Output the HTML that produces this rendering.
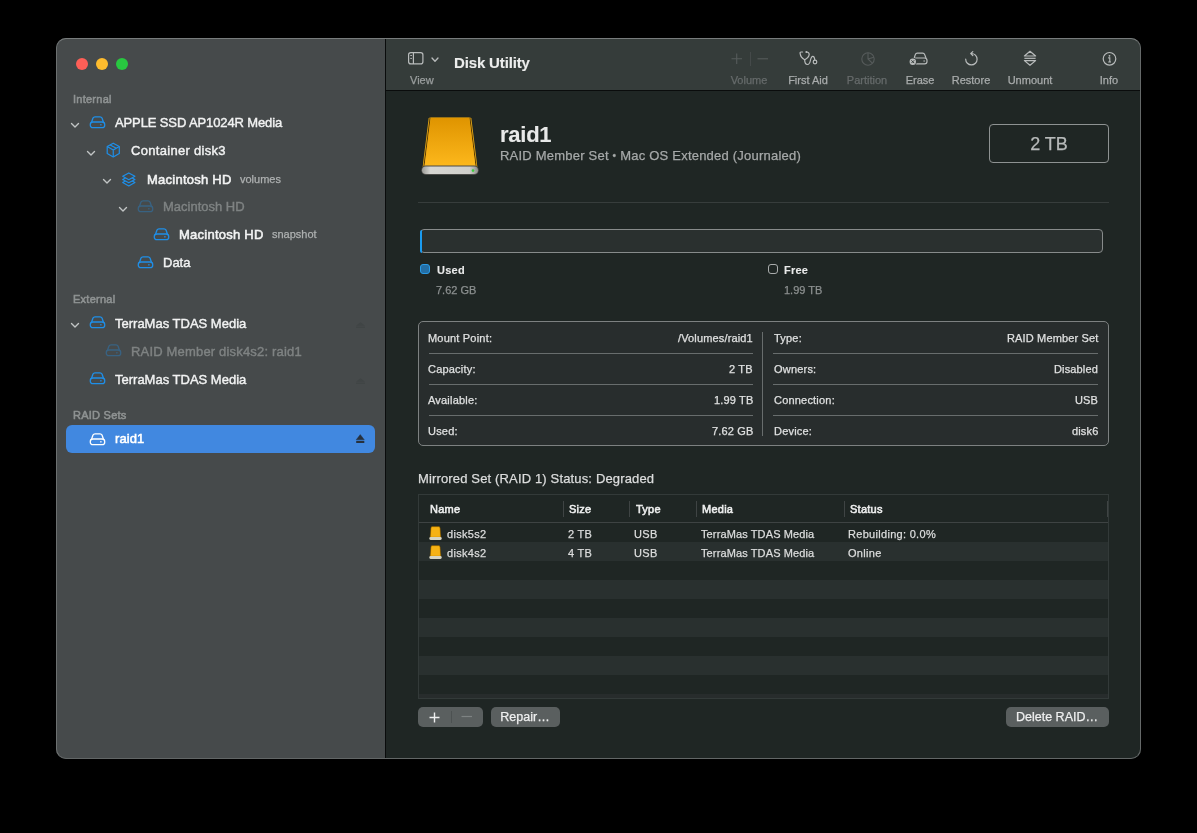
<!DOCTYPE html>
<html><head><meta charset="utf-8"><title>Disk Utility</title>
<style>
*{box-sizing:border-box;margin:0;padding:0}
html,body{width:1197px;height:833px;background:#000;overflow:hidden;font-family:"Liberation Sans",sans-serif;position:relative}
#win{position:absolute;border-radius:10px;overflow:hidden}
#win .r{position:absolute}
.r{position:absolute}
.t{position:absolute;white-space:nowrap;line-height:1;will-change:transform;-webkit-text-stroke:0.25px currentColor}
svg{position:absolute;overflow:visible}
</style></head><body>
<div id=win style="left:56px;top:38px;width:1085px;height:721px">
<div class=r style="left:0;top:0;width:329px;height:721px;background:#464a4b"></div>
<div class=r style="left:329px;top:0;width:1px;height:721px;background:#0a0c0c"></div>
<div class=r style="left:330px;top:0;width:755px;height:52px;background:#353c3a"></div>
<div class=r style="left:330px;top:52px;width:755px;height:1px;background:#0a0c0c"></div>
<div class=r style="left:330px;top:53px;width:755px;height:668px;background:#1f2624"></div>
</div>
<div class=r style="left:76px;top:58px;width:12px;height:12px;border-radius:50%;background:#fe5f57"></div>
<div class=r style="left:96px;top:58px;width:12px;height:12px;border-radius:50%;background:#febc2e"></div>
<div class=r style="left:116px;top:58px;width:12px;height:12px;border-radius:50%;background:#28c840"></div>
<div class=t style="top:93.69px;font-size:11px;color:#8f9393;-webkit-text-stroke:0.55px currentColor;letter-spacing:0.25px;left:72.5px;">Internal</div>
<svg style="left:69.7px;top:121.7px" width="10" height="7" viewBox="0 0 10 7"><path d='M1.5 1.5 L5 5 L8.5 1.5' fill='none' stroke='#c2c5c5' stroke-width='1.4' stroke-linecap='round' stroke-linejoin='round'/></svg>
<svg style="left:88.9px;top:115px" width="17" height="14" viewBox="0 0 17 14"><g fill='none' stroke='#1f8fe8' stroke-width='1.3' opacity='1' stroke-linejoin='round'><path d='M2.6 7 L4 3 Q4.6 1.8 6 1.8 H11 Q12.4 1.8 13 3 L14.4 7'/><rect x='1.3' y='7' width='14.4' height='5.7' rx='2.5'/></g><circle cx='11.9' cy='9.85' r='0.8' fill='#1f8fe8' opacity='1'/></svg>
<div class=t style="top:116.00px;font-size:13px;color:#f2f3f3;-webkit-text-stroke:0.4px currentColor;letter-spacing:-0.12px;left:115.2px;">APPLE SSD AP1024R Media</div>
<svg style="left:85.5px;top:149.7px" width="10" height="7" viewBox="0 0 10 7"><path d='M1.5 1.5 L5 5 L8.5 1.5' fill='none' stroke='#c2c5c5' stroke-width='1.4' stroke-linecap='round' stroke-linejoin='round'/></svg>
<svg style="left:106px;top:142px" width="15" height="16" viewBox="0 0 15 16"><g fill='none' stroke='#1f8fe8' stroke-width='1.2' stroke-linejoin='round'><path d='M7.25 1.2 L13.3 4.6 V11.6 L7.25 15 L1.2 11.6 V4.6 Z'/><path d='M1.2 4.6 L7.25 8 L13.3 4.6 M7.25 8 V15'/><path d='M4.2 2.9 L10.3 6.3' /></g></svg>
<div class=t style="top:144.00px;font-size:13px;color:#f2f3f3;-webkit-text-stroke:0.4px currentColor;letter-spacing:0.3px;left:131.2px;">Container disk3</div>
<svg style="left:101.5px;top:177.7px" width="10" height="7" viewBox="0 0 10 7"><path d='M1.5 1.5 L5 5 L8.5 1.5' fill='none' stroke='#c2c5c5' stroke-width='1.4' stroke-linecap='round' stroke-linejoin='round'/></svg>
<svg style="left:122px;top:171.5px" width="14" height="15" viewBox="0 0 14 15"><path d='M6.8 7.1000000000000005 L12.9 10.5 L6.8 13.9 L0.7 10.5 Z' fill='#45494a' stroke='#1f8fe8' stroke-width='1.2' stroke-linejoin='round'/><path d='M6.8 4.0 L12.9 7.4 L6.8 10.8 L0.7 7.4 Z' fill='#45494a' stroke='#1f8fe8' stroke-width='1.2' stroke-linejoin='round'/><path d='M6.8 0.9 L12.9 4.3 L6.8 7.7 L0.7 4.3 Z' fill='#45494a' stroke='#1f8fe8' stroke-width='1.2' stroke-linejoin='round'/></svg>
<div class=t style="top:173.00px;font-size:13px;color:#f2f3f3;-webkit-text-stroke:0.55px currentColor;letter-spacing:0.25px;left:147.3px;">Macintosh HD</div>
<div class=t style="top:173.99px;font-size:11px;color:#aeb1b1;left:239.5px;">volumes</div>
<svg style="left:117.5px;top:205.7px" width="10" height="7" viewBox="0 0 10 7"><path d='M1.5 1.5 L5 5 L8.5 1.5' fill='none' stroke='#c2c5c5' stroke-width='1.4' stroke-linecap='round' stroke-linejoin='round'/></svg>
<svg style="left:136.9px;top:199px" width="17" height="14" viewBox="0 0 17 14"><g fill='none' stroke='#1f8fe8' stroke-width='1.3' opacity='0.35' stroke-linejoin='round'><path d='M2.6 7 L4 3 Q4.6 1.8 6 1.8 H11 Q12.4 1.8 13 3 L14.4 7'/><rect x='1.3' y='7' width='14.4' height='5.7' rx='2.5'/></g><circle cx='11.9' cy='9.85' r='0.8' fill='#1f8fe8' opacity='0.35'/></svg>
<div class=t style="top:200.00px;font-size:13px;color:#7f8383;-webkit-text-stroke:0.4px currentColor;left:163.3px;">Macintosh HD</div>
<svg style="left:152.9px;top:227px" width="17" height="14" viewBox="0 0 17 14"><g fill='none' stroke='#1f8fe8' stroke-width='1.3' opacity='1' stroke-linejoin='round'><path d='M2.6 7 L4 3 Q4.6 1.8 6 1.8 H11 Q12.4 1.8 13 3 L14.4 7'/><rect x='1.3' y='7' width='14.4' height='5.7' rx='2.5'/></g><circle cx='11.9' cy='9.85' r='0.8' fill='#1f8fe8' opacity='1'/></svg>
<div class=t style="top:228.00px;font-size:13px;color:#f2f3f3;-webkit-text-stroke:0.55px currentColor;letter-spacing:0.25px;left:179.3px;">Macintosh HD</div>
<div class=t style="top:228.99px;font-size:11px;color:#aeb1b1;left:271.5px;">snapshot</div>
<svg style="left:136.9px;top:255px" width="17" height="14" viewBox="0 0 17 14"><g fill='none' stroke='#1f8fe8' stroke-width='1.3' opacity='1' stroke-linejoin='round'><path d='M2.6 7 L4 3 Q4.6 1.8 6 1.8 H11 Q12.4 1.8 13 3 L14.4 7'/><rect x='1.3' y='7' width='14.4' height='5.7' rx='2.5'/></g><circle cx='11.9' cy='9.85' r='0.8' fill='#1f8fe8' opacity='1'/></svg>
<div class=t style="top:256.00px;font-size:13px;color:#f2f3f3;-webkit-text-stroke:0.4px currentColor;left:163.3px;">Data</div>
<div class=t style="top:293.69px;font-size:11px;color:#8f9393;-webkit-text-stroke:0.55px currentColor;letter-spacing:0.25px;left:72.5px;">External</div>
<svg style="left:69.7px;top:321.7px" width="10" height="7" viewBox="0 0 10 7"><path d='M1.5 1.5 L5 5 L8.5 1.5' fill='none' stroke='#c2c5c5' stroke-width='1.4' stroke-linecap='round' stroke-linejoin='round'/></svg>
<svg style="left:88.9px;top:315px" width="17" height="14" viewBox="0 0 17 14"><g fill='none' stroke='#1f8fe8' stroke-width='1.3' opacity='1' stroke-linejoin='round'><path d='M2.6 7 L4 3 Q4.6 1.8 6 1.8 H11 Q12.4 1.8 13 3 L14.4 7'/><rect x='1.3' y='7' width='14.4' height='5.7' rx='2.5'/></g><circle cx='11.9' cy='9.85' r='0.8' fill='#1f8fe8' opacity='1'/></svg>
<div class=t style="top:317.00px;font-size:13px;color:#f2f3f3;-webkit-text-stroke:0.4px currentColor;left:115.3px;">TerraMas TDAS Media</div>
<svg style="left:104.9px;top:343px" width="17" height="14" viewBox="0 0 17 14"><g fill='none' stroke='#1f8fe8' stroke-width='1.3' opacity='0.35' stroke-linejoin='round'><path d='M2.6 7 L4 3 Q4.6 1.8 6 1.8 H11 Q12.4 1.8 13 3 L14.4 7'/><rect x='1.3' y='7' width='14.4' height='5.7' rx='2.5'/></g><circle cx='11.9' cy='9.85' r='0.8' fill='#1f8fe8' opacity='0.35'/></svg>
<div class=t style="top:345.00px;font-size:13px;color:#7f8383;-webkit-text-stroke:0.4px currentColor;letter-spacing:0.18px;left:131.2px;">RAID Member disk4s2: raid1</div>
<svg style="left:88.9px;top:371px" width="17" height="14" viewBox="0 0 17 14"><g fill='none' stroke='#1f8fe8' stroke-width='1.3' opacity='1' stroke-linejoin='round'><path d='M2.6 7 L4 3 Q4.6 1.8 6 1.8 H11 Q12.4 1.8 13 3 L14.4 7'/><rect x='1.3' y='7' width='14.4' height='5.7' rx='2.5'/></g><circle cx='11.9' cy='9.85' r='0.8' fill='#1f8fe8' opacity='1'/></svg>
<div class=t style="top:373.00px;font-size:13px;color:#f2f3f3;-webkit-text-stroke:0.4px currentColor;left:115.3px;">TerraMas TDAS Media</div>
<svg style="left:355px;top:321.5px" width="11" height="6" viewBox="0 0 11 6"><path d='M5.5 0.3 L10 3.8 H1 Z' fill='#404545'/><rect x='1' y='4.6' width='9' height='1.3' fill='#404545'/></svg>
<svg style="left:355px;top:377.5px" width="11" height="6" viewBox="0 0 11 6"><path d='M5.5 0.3 L10 3.8 H1 Z' fill='#404545'/><rect x='1' y='4.6' width='9' height='1.3' fill='#404545'/></svg>
<div class=t style="top:409.69px;font-size:11px;color:#8f9393;-webkit-text-stroke:0.55px currentColor;letter-spacing:0.25px;left:72.5px;">RAID Sets</div>
<div class=r style="left:66px;top:425px;width:309px;height:28px;border-radius:6px;background:#4188e0"></div>
<svg style="left:88.9px;top:432px" width="17" height="14" viewBox="0 0 17 14"><g fill='none' stroke='#ffffff' stroke-width='1.3' opacity='1' stroke-linejoin='round'><path d='M2.6 7 L4 3 Q4.6 1.8 6 1.8 H11 Q12.4 1.8 13 3 L14.4 7'/><rect x='1.3' y='7' width='14.4' height='5.7' rx='2.5'/></g><circle cx='11.9' cy='9.85' r='0.8' fill='#ffffff' opacity='1'/></svg>
<div class=t style="top:432.00px;font-size:13px;color:#ffffff;-webkit-text-stroke:0.55px currentColor;letter-spacing:0.1px;left:115.3px;">raid1</div>
<svg style="left:355.5px;top:434px" width="9" height="10" viewBox="0 0 9 10"><path d='M4.25 0.6 L8.3 5.8 H0.2 Z' fill='#27313d' stroke='#27313d' stroke-width='0.4' stroke-linejoin='round'/><rect x='0.2' y='6.9' width='8.1' height='2.1' fill='#27313d'/></svg>
<svg style="left:408px;top:52px" width="16" height="13" viewBox="0 0 16 13"><g fill='none' stroke='#b9bcbc' stroke-width='1.2'><rect x='0.6' y='0.6' width='14.3' height='11.3' rx='2.2'/><path d='M5.4 0.6 V11.9'/></g><rect x='2.3' y='3' width='1.6' height='1' fill='#b9bcbc'/><rect x='2.3' y='5.9' width='1.6' height='1' fill='#b9bcbc'/></svg>
<svg style="left:430.5px;top:56.5px" width="9" height="6" viewBox="0 0 9 6"><path d='M1 1 L4 4.3 L7 1' fill='none' stroke='#b9bcbc' stroke-width='1.3' stroke-linecap='round' stroke-linejoin='round'/></svg>
<div class=t style="top:75.29px;font-size:11px;color:#9a9e9e;left:409.5px;">View</div>
<div class=t style="top:55.10px;font-size:15px;color:#ecedec;font-weight:bold;-webkit-text-stroke:0.1px currentColor;letter-spacing:-0.15px;left:454.0px;">Disk Utility</div>
<svg style="left:730.5px;top:52.5px" width="12" height="12" viewBox="0 0 12 12"><path d='M5.7 0.5 V11 M0.5 5.8 H11' stroke='#565b5b' stroke-width='1.1'/></svg>
<div class=r style="left:749.5px;top:52px;width:1px;height:14px;background:#454a4a"></div>
<svg style="left:756.5px;top:52.5px" width="12" height="12" viewBox="0 0 12 12"><path d='M0.5 5.8 H11' stroke='#565b5b' stroke-width='1.1'/></svg>
<div class=t style="top:75.29px;font-size:11px;color:#666b6b;left:449.29999999999995px;width:600px;text-align:center;">Volume</div>
<svg style="left:799px;top:51px" width="19" height="15" viewBox="0 0 19 15"><g fill='none' stroke='#b9bcbc' stroke-width='1.2' stroke-linecap='round' stroke-linejoin='round'><path d='M3.6 1 H2 Q1 1 1.1 2.4 Q1.6 6.6 5.7 8.8 Q9.8 6.6 10.2 3.5 Q10.4 1.3 7.4 1'/><path d='M5.7 8.8 Q5.7 13.5 8.4 13.5 Q10.6 13.5 11.4 9.5 Q12.2 5.3 13.8 5.3 Q15.5 5.3 15.8 9'/><circle cx='16' cy='11' r='1.8'/></g><circle cx='7.4' cy='1.1' r='1' fill='#b9bcbc'/></svg>
<div class=t style="top:75.29px;font-size:11px;color:#a9acac;left:508px;width:600px;text-align:center;">First Aid</div>
<svg style="left:860.5px;top:51.5px" width="14" height="14" viewBox="0 0 14 14"><g fill='none' stroke='#565b5b' stroke-width='1.1'><circle cx='7' cy='7' r='6.2'/><path d='M7 0.8 V7 L11.3 11.2 M7 7 L12.9 5.2'/></g></svg>
<div class=t style="top:75.29px;font-size:11px;color:#666b6b;left:566.5px;width:600px;text-align:center;">Partition</div>
<svg style="left:908px;top:51px" width="20" height="15" viewBox="0 0 20 15"><g fill='none' stroke='#b9bcbc' stroke-width='1.2' stroke-linejoin='round'><path d='M6.2 7 L7.3 3.6 Q7.8 2.2 9.3 2.2 H14.7 Q16.2 2.2 16.7 3.6 L18 7'/><rect x='5.2' y='7' width='13.8' height='5.8' rx='2.4'/></g><circle cx='16.1' cy='10' r='0.75' fill='#b9bcbc'/><circle cx='4.8' cy='10.7' r='3.9' fill='#353c3a'/><circle cx='4.8' cy='10.7' r='3.2' fill='#b9bcbc'/><path d='M3.4 9.3 L6.2 12.1 M6.2 9.3 L3.4 12.1' stroke='#353c3a' stroke-width='1'/></svg>
<div class=t style="top:75.29px;font-size:11px;color:#a9acac;left:619.7px;width:600px;text-align:center;">Erase</div>
<svg style="left:964px;top:51px" width="15" height="15" viewBox="0 0 15 15"><g fill='none' stroke='#b9bcbc' stroke-width='1.2' stroke-linecap='round' stroke-linejoin='round'><path d='M1.7 8.2 A5.7 5.7 0 1 0 7.4 2.5'/><path d='M8.8 0.6 L6.8 2.5 L8.8 4.5'/></g></svg>
<div class=t style="top:75.29px;font-size:11px;color:#a9acac;left:671.2px;width:600px;text-align:center;">Restore</div>
<svg style="left:1023px;top:50px" width="14" height="17" viewBox="0 0 14 17"><g fill='none' stroke='#b9bcbc' stroke-width='1.2' stroke-linejoin='round'><path d='M7 1.3 L12.6 6 H1.4 Z'/><path d='M1.4 8.3 H12.6'/><path d='M1.4 10.6 H12.6 L7 15.3 Z'/></g></svg>
<div class=t style="top:75.29px;font-size:11px;color:#a9acac;left:729.8px;width:600px;text-align:center;">Unmount</div>
<svg style="left:1102px;top:51.5px" width="15" height="14" viewBox="0 0 15 14"><circle cx='7.5' cy='6.8' r='6.3' fill='none' stroke='#b9bcbc' stroke-width='1.2'/><circle cx='7.5' cy='3.8' r='0.9' fill='#b9bcbc'/><path d='M6.2 5.9 H7.8 V9.9 M6.2 10 H9' fill='none' stroke='#b9bcbc' stroke-width='1.1'/></svg>
<div class=t style="top:75.29px;font-size:11px;color:#a9acac;left:808.7px;width:600px;text-align:center;">Info</div>
<svg style="left:418px;top:116px" width="64" height="62" viewBox="0 0 64 62">
<defs>
<linearGradient id='og' x1='0' y1='0' x2='0' y2='1'><stop offset='0' stop-color='#df9400'/><stop offset='1' stop-color='#fdb81c'/></linearGradient>
<linearGradient id='sg' x1='0' y1='0' x2='1' y2='0'><stop offset='0' stop-color='#9c9c98'/><stop offset='0.15' stop-color='#d6d6d2'/><stop offset='0.85' stop-color='#cfcfcb'/><stop offset='1' stop-color='#8e8e8a'/></linearGradient>
</defs>
<path d='M10.6 2.6 Q11 1.6 12.5 1.6 H51.5 Q53 1.6 53.4 2.6 L59.4 51 H4.6 Z' fill='#e0a416'/>
<path d='M12.1 1.8 L5.9 51' stroke='#5a3a00' stroke-width='1' fill='none'/>
<path d='M51.9 1.8 L58.1 51' stroke='#5a3a00' stroke-width='1' fill='none'/>
<path d='M12.8 1.8 H51.2 L57.5 50.5 H6.5 Z' fill='url(#og)'/>
<rect x='3.2' y='49.6' width='57.6' height='9.3' rx='4.6' fill='#4b4b48'/>
<rect x='4' y='50.4' width='56' height='7.6' rx='3.8' fill='url(#sg)'/>
<circle cx='55' cy='54.6' r='1.3' fill='#3ccd3c'/>
</svg>
<div class=t style="top:124.28px;font-size:22px;color:#e8e9e9;font-weight:bold;-webkit-text-stroke:0.1px currentColor;letter-spacing:-0.25px;left:499.9px;">raid1</div>
<div class=t style="top:149.20px;font-size:13px;color:#a6a9a9;letter-spacing:0.22px;left:499.8px;">RAID Member Set <span style="font-size:10px;position:relative;top:-1px">•</span> Mac OS Extended (Journaled)</div>
<div class=r style="left:989px;top:124px;width:120px;height:39px;border:1px solid #8e9292;border-radius:4px"></div>
<div class=t style="top:134.86px;font-size:18px;color:#b7baba;left:749px;width:600px;text-align:center;">2 TB</div>
<div class=r style="left:418px;top:202px;width:691px;height:1px;background:#373d3c"></div>
<div class=r style="left:419.5px;top:229px;width:683.5px;height:24px;border:1px solid #878b8b;border-radius:4px;background:#2a302f"></div>
<div class=r style="left:419.5px;top:229.5px;width:2.5px;height:23px;background:#1a9bf0;border-radius:4px 0 0 4px"></div>
<div class=r style="left:420px;top:264px;width:10px;height:10px;border:1px solid #2a9be6;border-radius:3px;background:#246fa6"></div>
<div class=t style="top:264.69px;font-size:11px;color:#e9eaea;font-weight:bold;-webkit-text-stroke:0.1px currentColor;letter-spacing:0.25px;left:437px;">Used</div>
<div class=t style="top:284.69px;font-size:11px;color:#8b8f8f;left:436.2px;">7.62 GB</div>
<div class=r style="left:768px;top:264px;width:10px;height:10px;border:1px solid #a9acac;border-radius:3px"></div>
<div class=t style="top:264.69px;font-size:11px;color:#e9eaea;font-weight:bold;-webkit-text-stroke:0.1px currentColor;letter-spacing:0.25px;left:784.2px;">Free</div>
<div class=t style="top:284.69px;font-size:11px;color:#8b8f8f;left:784px;">1.99 TB</div>
<div class=r style="left:418px;top:321px;width:691px;height:125px;border:1px solid #7d8181;border-radius:5px;background:#282d2d"></div>
<div class=t style="top:332.69px;font-size:11px;color:#dfe0e0;letter-spacing:0.2px;left:428.2px;">Mount Point:</div>
<div class=t style="top:332.69px;font-size:11px;color:#dfe0e0;letter-spacing:0.15px;right:444px;">/Volumes/raid1</div>
<div class=t style="top:332.69px;font-size:11px;color:#dfe0e0;letter-spacing:0.2px;left:774.2px;">Type:</div>
<div class=t style="top:332.69px;font-size:11px;color:#dfe0e0;letter-spacing:0.15px;right:98.79999999999995px;">RAID Member Set</div>
<div class=r style="left:428.5px;top:353px;width:324px;height:1px;background:#686d6d"></div>
<div class=r style="left:772.5px;top:353px;width:325px;height:1px;background:#686d6d"></div>
<div class=t style="top:363.69px;font-size:11px;color:#dfe0e0;letter-spacing:0.2px;left:428.2px;">Capacity:</div>
<div class=t style="top:363.69px;font-size:11px;color:#dfe0e0;letter-spacing:0.15px;right:444px;">2 TB</div>
<div class=t style="top:363.69px;font-size:11px;color:#dfe0e0;letter-spacing:0.2px;left:774.2px;">Owners:</div>
<div class=t style="top:363.69px;font-size:11px;color:#dfe0e0;letter-spacing:0.15px;right:98.79999999999995px;">Disabled</div>
<div class=r style="left:428.5px;top:384px;width:324px;height:1px;background:#686d6d"></div>
<div class=r style="left:772.5px;top:384px;width:325px;height:1px;background:#686d6d"></div>
<div class=t style="top:394.69px;font-size:11px;color:#dfe0e0;letter-spacing:0.2px;left:428.2px;">Available:</div>
<div class=t style="top:394.69px;font-size:11px;color:#dfe0e0;letter-spacing:0.15px;right:444px;">1.99 TB</div>
<div class=t style="top:394.69px;font-size:11px;color:#dfe0e0;letter-spacing:0.2px;left:774.2px;">Connection:</div>
<div class=t style="top:394.69px;font-size:11px;color:#dfe0e0;letter-spacing:0.15px;right:98.79999999999995px;">USB</div>
<div class=r style="left:428.5px;top:415px;width:324px;height:1px;background:#686d6d"></div>
<div class=r style="left:772.5px;top:415px;width:325px;height:1px;background:#686d6d"></div>
<div class=t style="top:425.69px;font-size:11px;color:#dfe0e0;letter-spacing:0.2px;left:428.2px;">Used:</div>
<div class=t style="top:425.69px;font-size:11px;color:#dfe0e0;letter-spacing:0.15px;right:444px;">7.62 GB</div>
<div class=t style="top:425.69px;font-size:11px;color:#dfe0e0;letter-spacing:0.2px;left:774.2px;">Device:</div>
<div class=t style="top:425.69px;font-size:11px;color:#dfe0e0;letter-spacing:0.15px;right:98.79999999999995px;">disk6</div>
<div class=r style="left:762px;top:332px;width:1px;height:104px;background:#686d6d"></div>
<div class=t style="top:472.00px;font-size:13px;color:#dcdddd;letter-spacing:0.15px;left:417.6px;">Mirrored Set (RAID 1) Status: Degraded</div>
<div class=r style="left:418px;top:494px;width:691px;height:205px;border:1px solid #333a39;background:#1f2624"></div>
<div class=r style="left:419px;top:542px;width:689px;height:19px;background:#29302f"></div>
<div class=r style="left:419px;top:580px;width:689px;height:19px;background:#29302f"></div>
<div class=r style="left:419px;top:618px;width:689px;height:19px;background:#29302f"></div>
<div class=r style="left:419px;top:656px;width:689px;height:19px;background:#29302f"></div>
<div class=r style="left:419px;top:694px;width:689px;height:4px;background:#29302f"></div>
<div class=r style="left:419px;top:522px;width:689px;height:1px;background:#3e4343"></div>
<div class=r style="left:419px;top:694px;width:689px;height:4px;background:#272c2c"></div>
<div class=r style="left:563px;top:501px;width:1px;height:16px;background:#3f4444"></div>
<div class=r style="left:629px;top:501px;width:1px;height:16px;background:#3f4444"></div>
<div class=r style="left:696px;top:501px;width:1px;height:16px;background:#3f4444"></div>
<div class=r style="left:844px;top:501px;width:1px;height:16px;background:#3f4444"></div>
<div class=r style="left:1107px;top:501px;width:1px;height:16px;background:#3f4444"></div>
<div class=t style="top:503.59px;font-size:11px;color:#eeefef;-webkit-text-stroke:0.55px currentColor;letter-spacing:0.25px;left:429.8px;">Name</div>
<div class=t style="top:503.59px;font-size:11px;color:#eeefef;-webkit-text-stroke:0.55px currentColor;letter-spacing:0.25px;left:569px;">Size</div>
<div class=t style="top:503.59px;font-size:11px;color:#eeefef;-webkit-text-stroke:0.55px currentColor;letter-spacing:0.25px;left:635.5px;">Type</div>
<div class=t style="top:503.59px;font-size:11px;color:#eeefef;-webkit-text-stroke:0.55px currentColor;letter-spacing:0.25px;left:702px;">Media</div>
<div class=t style="top:503.59px;font-size:11px;color:#eeefef;-webkit-text-stroke:0.55px currentColor;letter-spacing:0.25px;left:850.1px;">Status</div>
<svg style="left:428.5px;top:525.7px" width="13" height="15" viewBox="0 0 13 15"><path d='M1.9 1.9 Q2.1 0.6 3.4 0.6 H9.6 Q10.9 0.6 11.1 1.9 L11.9 11.3 H1.1 Z' fill='#f0a80a' stroke='#6a4800' stroke-width='0.5'/><path d='M2.8 1.6 H10.2 L10.9 10.6 H2.1 Z' fill='#f6b214'/><rect x='0.3' y='10.9' width='12.4' height='3' rx='1.3' fill='#d6d4c2'/></svg>
<div class=t style="top:528.89px;font-size:11px;color:#dcdddd;letter-spacing:0.3px;left:447.2px;">disk5s2</div>
<div class=t style="top:528.89px;font-size:11px;color:#dcdddd;letter-spacing:0.3px;left:567.5px;">2 TB</div>
<div class=t style="top:528.89px;font-size:11px;color:#dcdddd;letter-spacing:0.3px;left:633.5px;">USB</div>
<div class=t style="top:528.89px;font-size:11px;color:#dcdddd;letter-spacing:0.12px;left:700.9px;">TerraMas TDAS Media</div>
<div class=t style="top:528.89px;font-size:11px;color:#dcdddd;letter-spacing:0.3px;left:848.4px;">Rebuilding: 0.0%</div>
<svg style="left:428.5px;top:544.5px" width="13" height="15" viewBox="0 0 13 15"><path d='M1.9 1.9 Q2.1 0.6 3.4 0.6 H9.6 Q10.9 0.6 11.1 1.9 L11.9 11.3 H1.1 Z' fill='#f0a80a' stroke='#6a4800' stroke-width='0.5'/><path d='M2.8 1.6 H10.2 L10.9 10.6 H2.1 Z' fill='#f6b214'/><rect x='0.3' y='10.9' width='12.4' height='3' rx='1.3' fill='#d6d4c2'/></svg>
<div class=t style="top:547.69px;font-size:11px;color:#dcdddd;letter-spacing:0.3px;left:447.2px;">disk4s2</div>
<div class=t style="top:547.69px;font-size:11px;color:#dcdddd;letter-spacing:0.3px;left:567.5px;">4 TB</div>
<div class=t style="top:547.69px;font-size:11px;color:#dcdddd;letter-spacing:0.3px;left:633.5px;">USB</div>
<div class=t style="top:547.69px;font-size:11px;color:#dcdddd;letter-spacing:0.12px;left:700.9px;">TerraMas TDAS Media</div>
<div class=t style="top:547.69px;font-size:11px;color:#dcdddd;letter-spacing:0.3px;left:848.4px;">Online</div>
<div class=r style="left:418px;top:707px;width:65px;height:20px;border-radius:5px;background:#5a5f5f"></div>
<div class=r style="left:450.5px;top:711px;width:1px;height:12px;background:#4c5151"></div>
<svg style="left:429px;top:712px" width="11" height="11" viewBox="0 0 11 11"><path d='M5.5 0.5 V10.5 M0.5 5.5 H10.5' stroke='#eeefef' stroke-width='1.4'/></svg>
<svg style="left:461px;top:711px" width="12" height="11" viewBox="0 0 12 11"><path d='M0.5 5.5 H11' stroke='#7e8383' stroke-width='1.2'/></svg>
<div class=r style="left:491px;top:707px;width:69px;height:20px;border-radius:5px;background:#5a5f5f"></div>
<div class=t style="top:711.22px;font-size:12.5px;color:#eeefef;left:224.79999999999995px;width:600px;text-align:center;">Repair…</div>
<div class=r style="left:1006px;top:707px;width:103px;height:20px;border-radius:5px;background:#5a5f5f"></div>
<div class=t style="top:711.22px;font-size:12.5px;color:#eeefef;left:757px;width:600px;text-align:center;">Delete RAID…</div>
<div class=r style="left:56px;top:38px;width:1085px;height:721px;border-radius:10px;border:1px solid #787c7c;border-bottom-color:#626666;border-left-color:#6c7070;border-right-color:#656969"></div>
</body></html>
